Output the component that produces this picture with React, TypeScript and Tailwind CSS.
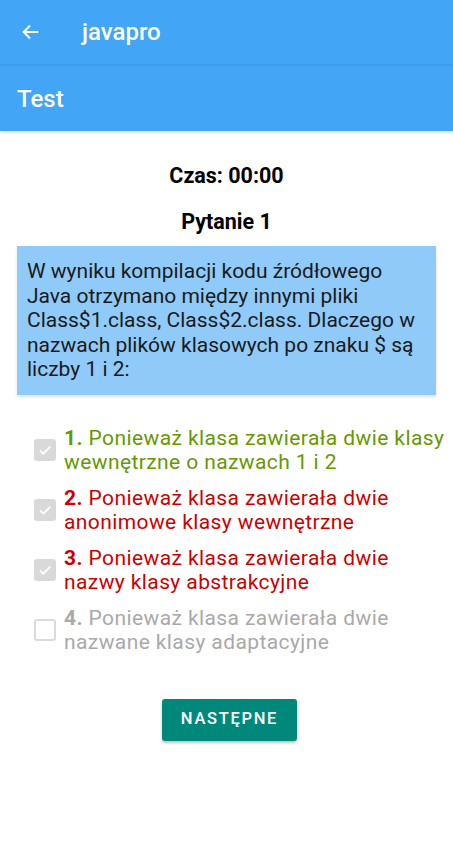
import React from "react";

function Check({ checked }: { checked: boolean }) {
  if (checked) {
    return (
      <div className="w-[22px] h-[22px] rounded-[3px] bg-[#d9d9d9] flex items-center justify-center shrink-0">
        <svg width="16" height="16" viewBox="0 0 24 24">
          <path d="M4.5 12.5l5 5L20 7" fill="none" stroke="#ffffff" strokeWidth="2.6" />
        </svg>
      </div>
    );
  }
  return <div className="w-[22px] h-[22px] rounded-[3px] border-2 border-[#dadada] shrink-0" />;
}

const options = [
  { n: "1.", t: "Ponieważ klasa zawierała dwie klasy wewnętrzne o nazwach 1 i 2", c: "text-[#669900]", checked: true },
  { n: "2.", t: "Ponieważ klasa zawierała dwie anonimowe klasy wewnętrzne", c: "text-[#cc0000]", checked: true },
  { n: "3.", t: "Ponieważ klasa zawierała dwie nazwy klasy abstrakcyjne", c: "text-[#cc0000]", checked: true },
  { n: "4.", t: "Ponieważ klasa zawierała dwie nazwane klasy adaptacyjne", c: "text-[#a9a9a9]", checked: false },
];

export default function App() {
  return (
    <div className="w-[453px] h-[863px] bg-white overflow-hidden" style={{ fontFamily: "Roboto, 'Noto Sans', sans-serif" }}>
      <div className="h-[64px] bg-[#42a5f5] flex items-center">
        <div className="pl-[20px] w-[82px] flex items-center">
          <svg width="22" height="22" viewBox="0 0 24 24">
            <path d="M20 12H4.5M11 5l-7 7 7 7" fill="none" stroke="#ffffff" strokeWidth="2.2" />
          </svg>
        </div>
        <span className="text-white text-[24px] font-medium">javapro</span>
      </div>
      <div className="h-[2px] bg-[#3e9ce8]" />
      <div className="h-[65px] bg-[#42a5f5] flex items-center pl-[17px] relative z-10 shadow-[0_2px_3px_rgba(0,0,0,0.12)]">
        <span className="text-white text-[24px] font-medium">Test</span>
      </div>
      <div className="pt-[33px] flex flex-col items-center">
        <div className="text-[21.5px] font-bold text-black leading-[24px]">Czas: 00:00</div>
        <div className="mt-[22px] text-[21.5px] font-bold text-black leading-[24px]">Pytanie 1</div>
      </div>
      <div className="mt-[12px] mx-[17px] bg-[#90caf9] px-[10px] py-[13px] text-[21px] leading-[24.5px] text-[#1a1a1a] shadow-[0_2px_3px_rgba(0,0,0,0.12)]">
        W wyniku kompilacji kodu źródłowego Java otrzymano między innymi pliki Class$1.class, Class$2.class. Dlaczego w nazwach plików klasowych po znaku $ są liczby 1 i 2:
      </div>
      <div className="mt-[31px] pl-[34px] pr-[6px] flex flex-col gap-[11px]">
        {options.map((o) => (
          <div key={o.n} className="flex items-center">
            <Check checked={o.checked} />
            <div className={`ml-[8px] text-[21px] tracking-[0.4px] leading-[24.5px] ${o.c}`}>
              <span className="font-bold">{o.n}</span> {o.t}
            </div>
          </div>
        ))}
      </div>
      <div className="mt-[44px] flex justify-center pl-[6px]">
        <button className="w-[135px] h-[42px] rounded-[3px] bg-[#00897b] text-white text-[16.5px] font-medium tracking-[1.7px] shadow-[0_2px_3px_rgba(0,0,0,0.25)]">
          NASTĘPNE
        </button>
      </div>
    </div>
  );
}
